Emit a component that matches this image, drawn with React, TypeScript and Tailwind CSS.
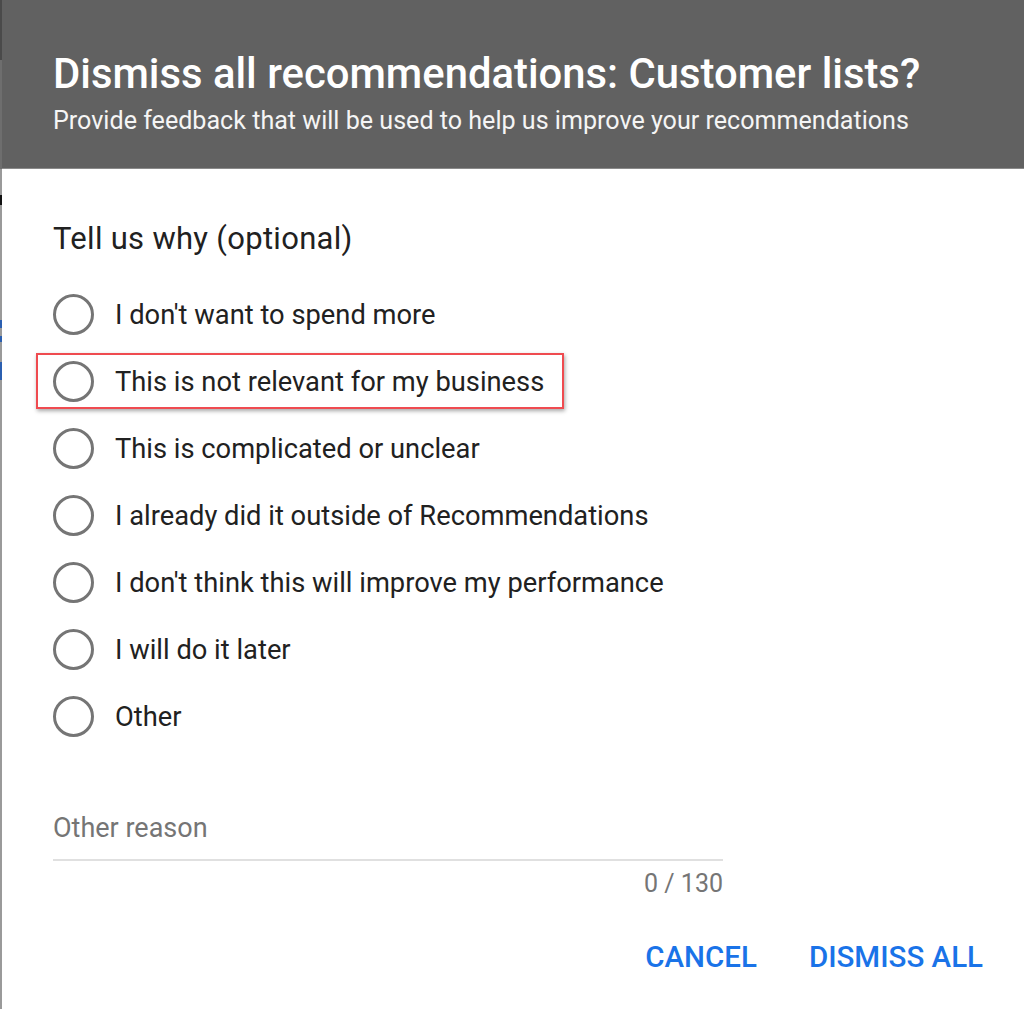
import React from "react";

const options = [
  "I don't want to spend more",
  "This is not relevant for my business",
  "This is complicated or unclear",
  "I already did it outside of Recommendations",
  "I don't think this will improve my performance",
  "I will do it later",
  "Other",
];

function Radio() {
  return <span className="block w-[41px] h-[41px] rounded-full border-[3px] border-[#757575] shrink-0" />;
}

export default function App() {
  return (
    <div
      className="w-[1024px] h-[1009px] flex overflow-hidden bg-white"
      style={{ fontFamily: "Roboto, 'Noto Sans', sans-serif" }}
    >
      <div className="w-[2px] flex flex-col shrink-0 bg-[#9a9a9a]">
        <div className="h-[60px] bg-[#4a4a4a]" />
        <div className="h-[109px] bg-[#6e6e6e]" />
        <div className="h-[26px] bg-[#9a9a9a]" />
        <div className="h-[10px] bg-[#111]" />
        <div className="h-[115px] bg-[#9a9a9a]" />
        <div className="h-[8px] bg-[#2b5fb0]" />
        <div className="h-[8px] bg-[#9a9a9a]" />
        <div className="h-[6px] bg-[#2b5fb0]" />
        <div className="h-[20px] bg-[#9a9a9a]" />
        <div className="h-[18px] bg-[#2b5fb0]" />
        <div className="flex-1 bg-[#9a9a9a]" />
      </div>
      <div className="flex-1 flex flex-col">
        <div className="h-[169px] bg-[#616161] border-b border-[#8a8a8a] pl-[51px] pt-[50px] text-white">
          <div className="text-[41.8px] leading-[48px] font-medium">
            Dismiss all recommendations: Customer lists?
          </div>
          <div className="mt-[8px] text-[25.1px] leading-[30px] text-[#f5f5f5]">
            Provide feedback that will be used to help us improve your recommendations
          </div>
        </div>
        <div className="pl-[51px] pt-[52px] flex flex-col">
          <div className="text-[31px] leading-[36px] tracking-[0.3px] text-[#212121]">Tell us why (optional)</div>
          <div className="mt-[24px] flex flex-col">
            {options.map((o, i) => (
              <div key={o} className="relative h-[67px] flex items-center gap-[21px]">
                {i === 1 && (
                  <div className="absolute left-[-17px] top-[5px] w-[528px] h-[56px] border-2 border-[#ef4b50] shadow-[1px_2px_4px_rgba(0,0,0,0.35)]" />
                )}
                <Radio />
                <span className="text-[27.3px] leading-[32px] text-[#212121]">{o}</span>
              </div>
            ))}
          </div>
          <div className="mt-[62px] w-[670px] flex flex-col">
            <div className="text-[27px] leading-[32px] text-[#757575] pb-[15px] border-b-2 border-[#e0e0e0]">
              Other reason
            </div>
            <div className="mt-[8px] text-right text-[25px] leading-[30px] text-[#757575]">0 / 130</div>
          </div>
          <div className="mt-[41px] flex justify-end pr-[41px] gap-[52px] text-[29.5px] leading-[34px] font-medium text-[#1a73e8]">
            <span>CANCEL</span>
            <span>DISMISS ALL</span>
          </div>
        </div>
      </div>
    </div>
  );
}
